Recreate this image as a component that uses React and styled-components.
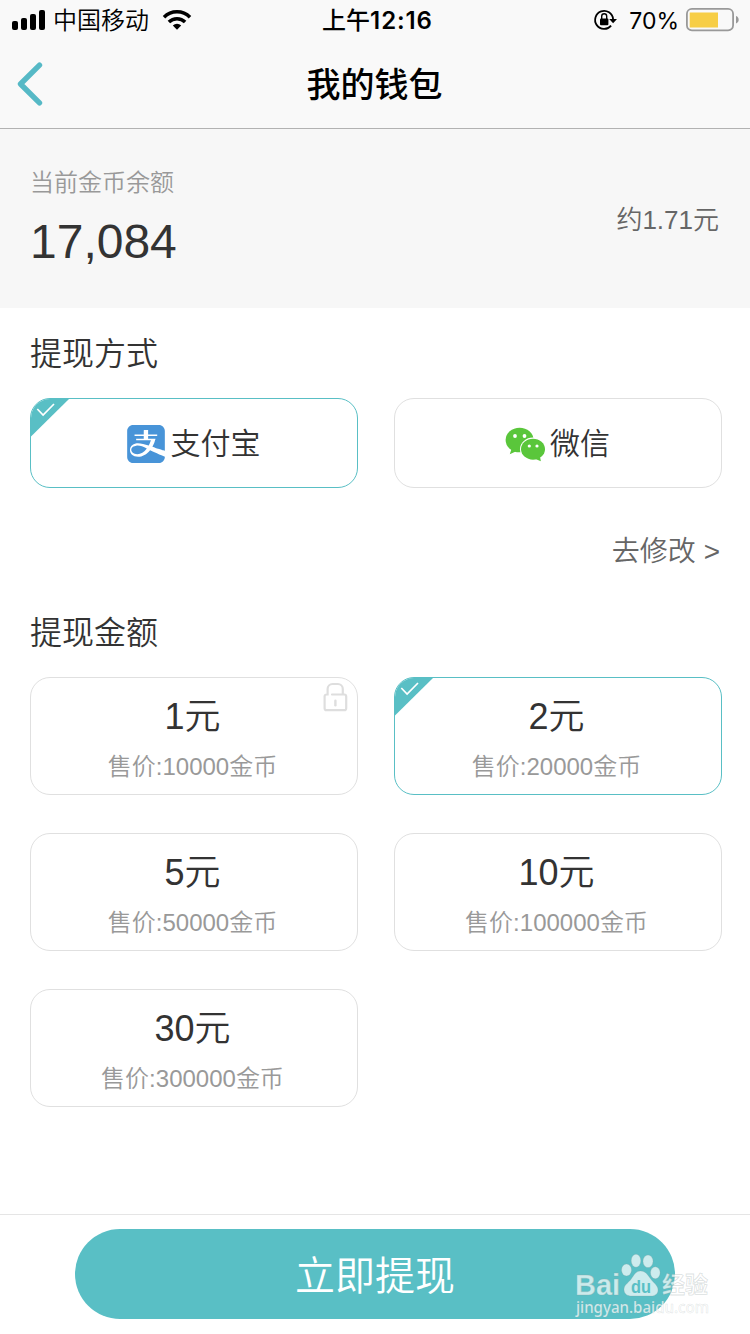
import React, { useState } from 'react'
import styled, { createGlobalStyle } from 'styled-components'
import { SiAlipay } from 'react-icons/si'

const teal = '#59bfc5'

const GlobalStyle = createGlobalStyle`
    * {
        box-sizing: border-box;
    }
    body {
        margin: 0;
        background: #fff;
        color: #333;
        font-family: 'Liberation Sans', 'Noto Sans CJK SC', sans-serif;
        font-weight: 350;
    }
    button {
        font-family: inherit;
        font-weight: inherit;
        color: inherit;
        padding: 0;
    }
`

const Page = styled.div`
    position: relative;
    display: flex;
    flex-direction: column;
    width: 750px;
    height: 1334px;
    overflow: hidden;
    background: #fff;
`

const Header = styled.header`
    height: 129px;
    background: #f9f9f9;
    border-bottom: 1px solid #b2b2b2;
`

const StatusBar = styled.div`
    display: grid;
    grid-template-columns: 1fr auto 1fr;
    align-items: center;
    height: 40px;
    padding: 0 11px 0 12px;
    color: #000;
    font-family: Inter, 'Noto Sans CJK SC', sans-serif;
    font-size: 24px;
    font-weight: 400;
    line-height: 38px;
`

const StatusGroup = styled.div`
    display: flex;
    align-items: center;
    justify-content: ${(props) => (props.$end ? 'flex-end' : 'flex-start')};
`

const Carrier = styled.span`
    margin: 0 13px 0 8px;
    padding-top: 2px;
    font-weight: 350;
`

const Time = styled.span`
    padding: 2px 0 0 4px;
    font-size: 24px;
    font-weight: 500;
`

const Digits = styled.span`
    font-size: 24px;
    font-weight: 600;
    letter-spacing: 0.9px;
`

const Percent = styled.span`
    margin: 0 7px 0 12px;
    padding-top: 2px;
    font-size: 23px;
`

const TitleBar = styled.div`
    display: grid;
    grid-template-columns: 60px 1fr 60px;
    align-items: center;
    height: 88px;
`

const BackButton = styled.button`
    display: flex;
    align-items: center;
    height: 88px;
    padding-left: 14px;
    border: 0;
    background: none;
`

const Title = styled.h1`
    margin: 0;
    padding: 3px 1px 0 0;
    color: #000;
    font-size: 34px;
    font-weight: 500;
    line-height: 85px;
    text-align: center;
`

const Balance = styled.section`
    display: flex;
    align-items: center;
    justify-content: space-between;
    height: 179px;
    padding: 0 31px 0 30px;
    background: #f7f7f7;
`

const BalanceLabel = styled.div`
    color: #999;
    font-size: 24px;
    line-height: 36px;
`

const BalanceValue = styled.div`
    margin-top: 11px;
    padding-bottom: 1px;
    font-size: 48px;
    line-height: 60px;
`

const Approx = styled.div`
    margin-top: 2px;
    color: #666;
    font-size: 26px;
    line-height: 36px;
`

const Content = styled.main`
    flex: 1;
    padding: 0 28px 0 30px;
`

const SectionTitle = styled.h2`
    height: 90px;
    margin: 0;
    padding-top: 1px;
    font-size: 32px;
    font-weight: inherit;
    line-height: 90px;
`

const CardGrid = styled.div`
    display: grid;
    grid-template-columns: 328px 328px;
    gap: 38px 36px;
`

const Card = styled.button`
    position: relative;
    display: flex;
    align-items: center;
    overflow: hidden;
    border: 1px solid ${(props) => (props.$active ? teal : '#e0e0e0')};
    border-radius: 20px;
    background: #fff;
`

const MethodCard = styled(Card)`
    justify-content: center;
    gap: ${(props) => props.$gap}px;
    height: 90px;
    padding: 2px 1px 0 0;
    font-size: 30px;
    line-height: 44px;
`

const AmountCard = styled(Card)`
    flex-direction: column;
    height: 118px;
    padding: 17px 3px 0 0;
`

const Amount = styled.span`
    font-size: 36px;
    line-height: 44px;
`

const Price = styled.span`
    margin-top: 11px;
    color: #999;
    font-size: 24px;
    line-height: 34px;
`

const Corner = styled.svg`
    position: absolute;
    top: -1px;
    left: -1px;
`

const LockMark = styled.svg`
    position: absolute;
    top: 4px;
    right: 9px;
`

const ModifyRow = styled.div`
    display: flex;
    justify-content: flex-end;
    height: 99px;
    padding: 43px 2px 0 0;
    color: #666;
    font-size: 28px;
    line-height: 42px;
`

const Footer = styled.footer`
    display: flex;
    justify-content: center;
    height: 120px;
    padding-top: 14px;
    border-top: 1px solid #e5e5e5;
`

const SubmitButton = styled.button`
    width: 600px;
    height: 90px;
    padding-top: 5px;
    border: 0;
    border-radius: 45px;
    background: ${teal};
    && {
        color: #fff;
    }
    font-size: 40px;
    line-height: 85px;
`

const Watermark = styled.svg`
    position: absolute;
    right: 36px;
    bottom: 14px;
    pointer-events: none;
`

const SignalIcon = () => (
    <svg width="33" height="20" viewBox="0 0 33 20">
        <rect x="0" y="11" width="6" height="9" rx="2" />
        <rect x="9" y="8" width="6" height="12" rx="2" />
        <rect x="18" y="4" width="6" height="16" rx="2" />
        <rect x="27" y="0" width="6" height="20" rx="2" />
    </svg>
)

const WifiIcon = () => (
    <svg width="30" height="20" viewBox="0 0 30 20">
        <g fill="none" stroke="#000" strokeWidth="3.5">
            <path d="M2 7.2a18.4 18.4 0 0 1 26 0" />
            <path d="M6.9 12a11.5 11.5 0 0 1 16.2 0" />
        </g>
        <path d="M15 19.8l-4.2-4.3a6 6 0 0 1 8.4 0z" />
    </svg>
)

const RotationLockIcon = () => (
    <svg width="24" height="24" viewBox="0 0 24 24">
        <path
            d="M20.1 11.2a9 9 0 1 0-2 6.4"
            fill="none"
            stroke="#000"
            strokeWidth="1.8"
        />
        <path d="M16.2 11h7.8L20.1 15.2z" />
        <rect x="7" y="10.4" width="8.4" height="6.8" rx="1" />
        <path
            d="M8.7 11V8.3a2.5 2.5 0 0 1 5 0V11"
            fill="none"
            stroke="#000"
            strokeWidth="1.4"
        />
    </svg>
)

const BatteryIcon = () => (
    <svg width="53" height="24" viewBox="0 0 53 24">
        <rect
            x="0.9"
            y="0.9"
            width="46.2"
            height="21.4"
            rx="5"
            fill="none"
            stroke="#999"
            strokeWidth="1.8"
        />
        <rect x="3.7" y="4.5" width="28.3" height="15" fill="#f7ce46" />
        <path d="M50 8c3.6 1.2 3.6 6.2 0 7.4z" fill="#999" />
    </svg>
)

const BackIcon = () => (
    <svg width="32" height="46" viewBox="0 0 32 46">
        <path
            d="M25.5 4.2L6.5 23l19 18.8"
            fill="none"
            stroke="#56b9c6"
            strokeWidth="5.4"
            strokeLinecap="round"
            strokeLinejoin="round"
        />
    </svg>
)

const WechatIcon = () => (
    <svg width="40" height="40" viewBox="0 0 40 40">
        <g fill="#5ac63b">
            <ellipse cx="14.6" cy="16" rx="14" ry="12.3" />
            <path d="M6.5 25L4.8 30.3l6.4-3z" />
        </g>
        <ellipse cx="28" cy="25.2" rx="13" ry="11.6" fill="#fff" />
        <g fill="#5ac63b">
            <ellipse cx="28" cy="25.2" rx="12" ry="10.5" />
            <path d="M30.5 35l5.4 2.3-.9-4.6z" />
        </g>
        <g fill="#fff">
            <circle cx="10" cy="12" r="1.9" />
            <circle cx="19.5" cy="12" r="1.9" />
            <circle cx="24.3" cy="22" r="1.6" />
            <circle cx="32" cy="22" r="1.6" />
        </g>
    </svg>
)

const CheckedCorner = () => (
    <Corner width="40" height="40" viewBox="0 0 40 40">
        <path d="M0 0h40L0 39.5z" fill={teal} />
        <path
            d="M7.3 11l5.8 6L24 6"
            fill="none"
            stroke="#fff"
            strokeWidth="1.7"
        />
    </Corner>
)

const LockIcon = () => (
    <LockMark width="25" height="30" viewBox="0 0 25 30">
        <g fill="none" stroke="#dedede" strokeWidth="2.2" strokeLinecap="round">
            <path d="M9 12.5h12.2a2 2 0 0 1 2 2v11.7a2 2 0 0 1-2 2H3.6a2 2 0 0 1-2-2V14.5a2 2 0 0 1 2-2h1V7a5 5 0 0 1 5-5h5.2a5 5 0 0 1 5 5v5" />
            <path d="M12.4 18.8v4.4" strokeWidth="2.4" />
        </g>
    </LockMark>
)

const BaiduMark = () => (
    <Watermark width="140" height="70" viewBox="0 0 140 70">
        <g
            fill="#fff"
            fillOpacity="0.7"
            stroke="#8a9a9a"
            strokeOpacity="0.3"
            strokeWidth="0.8"
        >
            <text
                x="1"
                y="45"
                fontFamily="Liberation Sans"
                fontWeight="700"
                fontSize="30"
                textLength="45"
                lengthAdjust="spacingAndGlyphs"
            >
                Bai
            </text>
            <ellipse cx="52.5" cy="20" rx="5" ry="6" />
            <ellipse cx="62" cy="10.7" rx="4.8" ry="6.5" />
            <ellipse cx="74" cy="11.3" rx="5" ry="6.3" />
            <ellipse cx="81.3" cy="22.8" rx="4.8" ry="6" />
            <path d="M66.5 21c5.5 0 7.5 4.5 11 9 3.5 4 6.5 6 6.5 10 0 4-3 6-7 6H57.5c-4 0-7.5-2-7.5-6.5 0-4.5 4-6.5 6.5-9.5 3-4 5-9 10-9z" />
            <text
                x="88"
                y="43"
                fontFamily="Noto Sans CJK SC"
                fontWeight="700"
                fontSize="23"
            >
                经验
            </text>
        </g>
        <text
            x="2"
            y="62.5"
            fill="#fff"
            fillOpacity="0.75"
            stroke="#8a9a9a"
            strokeOpacity="0.25"
            strokeWidth="0.6"
            fontFamily="Noto Sans"
            fontWeight="500"
            fontSize="15.5"
            textLength="133"
            lengthAdjust="spacingAndGlyphs"
        >
            jingyan.baidu.com
        </text>
        <text
            x="57"
            y="43"
            fill={teal}
            fontFamily="Liberation Sans"
            fontWeight="700"
            fontSize="19"
            textLength="20"
            lengthAdjust="spacingAndGlyphs"
        >
            du
        </text>
    </Watermark>
)

const amounts = [
    { value: 1, coins: 10000, locked: true },
    { value: 2, coins: 20000 },
    { value: 5, coins: 50000 },
    { value: 10, coins: 100000 },
    { value: 30, coins: 300000 },
]

const App = () => {
    const [method, setMethod] = useState('alipay')
    const [amount, setAmount] = useState(2)

    return (
        <Page>
            <GlobalStyle />
            <Header>
                <StatusBar>
                    <StatusGroup>
                        <SignalIcon />
                        <Carrier>中国移动</Carrier>
                        <WifiIcon />
                    </StatusGroup>
                    <Time>
                        上午<Digits>12:16</Digits>
                    </Time>
                    <StatusGroup $end>
                        <RotationLockIcon />
                        <Percent>70%</Percent>
                        <BatteryIcon />
                    </StatusGroup>
                </StatusBar>
                <TitleBar>
                    <BackButton aria-label="返回">
                        <BackIcon />
                    </BackButton>
                    <Title>我的钱包</Title>
                </TitleBar>
            </Header>

            <Balance>
                <div>
                    <BalanceLabel>当前金币余额</BalanceLabel>
                    <BalanceValue>17,084</BalanceValue>
                </div>
                <Approx>约1.71元</Approx>
            </Balance>

            <Content>
                <SectionTitle>提现方式</SectionTitle>
                <CardGrid>
                    <MethodCard
                        $active={method === 'alipay'}
                        $gap={6}
                        onClick={() => setMethod('alipay')}
                    >
                        {method === 'alipay' && <CheckedCorner />}
                        <SiAlipay size={38} color="#4894d8" />
                        支付宝
                    </MethodCard>
                    <MethodCard
                        $active={method === 'wechat'}
                        $gap={5}
                        onClick={() => setMethod('wechat')}
                    >
                        {method === 'wechat' && <CheckedCorner />}
                        <WechatIcon />
                        微信
                    </MethodCard>
                </CardGrid>
                <ModifyRow>去修改 &gt;</ModifyRow>
                <SectionTitle>提现金额</SectionTitle>
                <CardGrid>
                    {amounts.map((item) => (
                        <AmountCard
                            key={item.value}
                            $active={amount === item.value}
                            disabled={item.locked}
                            onClick={() => setAmount(item.value)}
                        >
                            {amount === item.value && <CheckedCorner />}
                            {item.locked && <LockIcon />}
                            <Amount>{item.value}元</Amount>
                            <Price>售价:{item.coins}金币</Price>
                        </AmountCard>
                    ))}
                </CardGrid>
            </Content>

            <Footer>
                <SubmitButton>立即提现</SubmitButton>
            </Footer>
            <BaiduMark />
        </Page>
    )
}

export default App
